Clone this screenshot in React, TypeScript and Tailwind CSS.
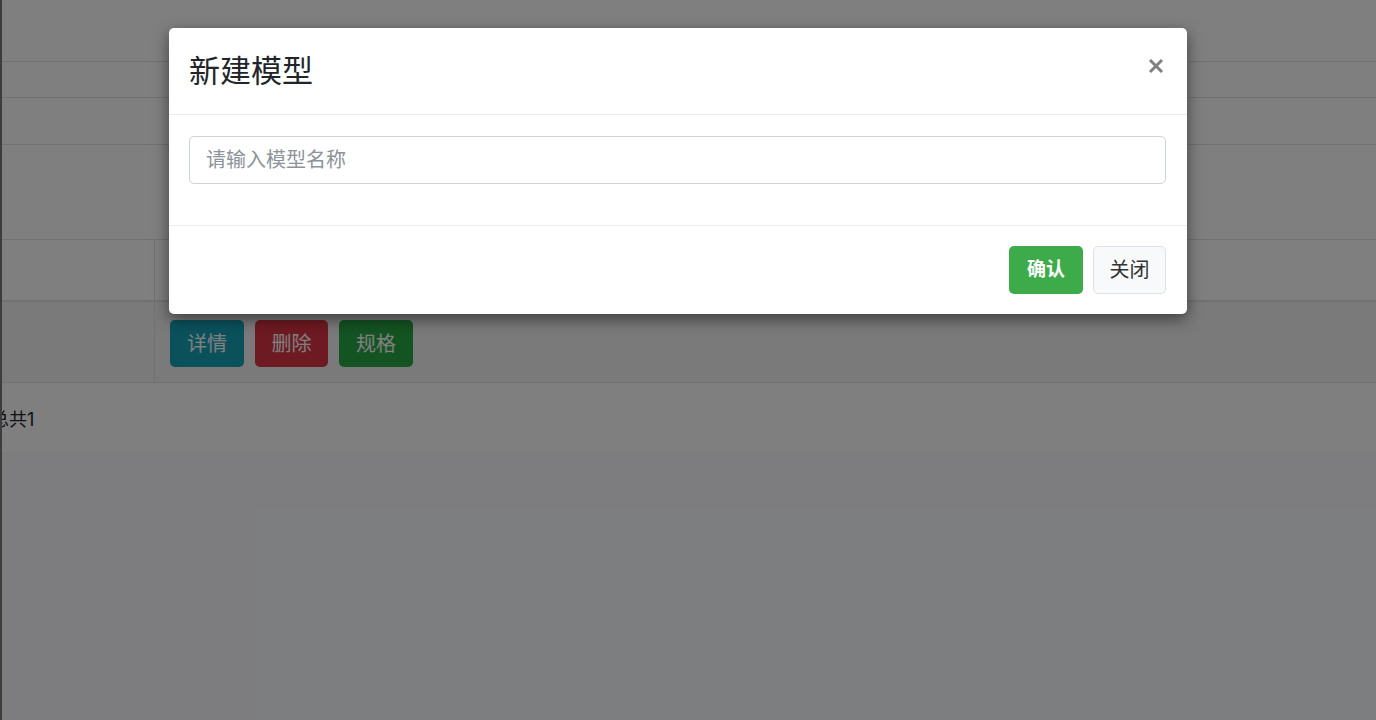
export default function App() {
    return (
        <div className="relative h-[720px] overflow-hidden bg-[#fafbfe] font-['Inter','Noto_Sans_CJK_SC',sans-serif] text-[#212529]">
            {/* page behind the modal */}
            <div className="h-full border-l-2 border-[#7a7a7a]">
                <div className="bg-white">
                    <div className="h-[62px] border-b border-[#dee2e6]"></div>
                    <div className="h-[36px] border-b border-[#dee2e6]"></div>
                    <div className="h-[47px] border-b border-[#dee2e6]"></div>
                    <div className="h-[95px] border-b border-[#dee2e6]"></div>
                    <div className="flex h-[62px] border-b-2 border-[#dee2e6]">
                        <div className="w-[153px] border-r border-[#dee2e6]"></div>
                        <div className="flex-1"></div>
                    </div>
                    <div className="flex h-[81px] border-b border-[#dee2e6] bg-[#f4f4f4]">
                        <div className="w-[153px] border-r border-[#dee2e6]"></div>
                        <div className="flex flex-1 items-start gap-[11px] pl-[15px] pt-[18px]">
                            <button className="h-[47px] w-[74px] rounded-[5px] bg-[#17a2b8] text-[20px] leading-[1.5] text-white">详情</button>
                            <button className="h-[47px] w-[73px] rounded-[5px] bg-[#dc3545] text-[20px] leading-[1.5] text-white">删除</button>
                            <button className="h-[47px] w-[74px] rounded-[5px] bg-[#28a745] text-[20px] leading-[1.5] text-white">规格</button>
                        </div>
                    </div>
                    <div className="flex h-[69px] items-center overflow-hidden pt-[4px]">
                        <span className="ml-[-11px] text-[18px] text-[#212529]">总共1</span>
                    </div>
                </div>
            </div>

            {/* backdrop */}
            <div className="absolute inset-0 bg-black/50"></div>

            {/* modal */}
            <div className="absolute left-[169px] top-[28px] w-[1018px] rounded-[5px] bg-white shadow-[0_5px_15px_rgba(0,0,0,0.5)]">
                <div className="flex h-[87px] items-center justify-between border-b border-[#e9ecef] px-[20px]">
                    <h4 className="text-[31px] font-normal leading-[46px] text-[#212529]">新建模型</h4>
                    <button className="mb-[10px] mr-[3px] text-[#808080]">
                        <svg width="16" height="16" viewBox="0 0 16 16">
                            <path d="M2 2 L14 14 M14 2 L2 14" stroke="currentColor" strokeWidth="3" fill="none" />
                        </svg>
                    </button>
                </div>
                <div className="px-[20px] pb-[41px] pt-[21px]">
                    <input
                        className="block h-[48px] w-[977px] rounded-[5px] border border-[#ced4da] px-[16px] text-[20px] text-[#495057] outline-none placeholder:text-[#8c9399]"
                        placeholder="请输入模型名称"
                    />
                </div>
                <div className="flex h-[89px] items-center justify-end gap-[10px] border-t border-[#e9ecef] px-[21px]">
                    <button className="h-[48px] w-[74px] rounded-[5px] bg-[#3dab4a] text-[19px] font-bold leading-[1.5] text-white">确认</button>
                    <button className="h-[48px] w-[73px] rounded-[5px] border border-[#dee2e6] bg-[#f8f9fa] text-[20px] leading-[1.5] text-[#333]">关闭</button>
                </div>
            </div>
        </div>
    );
}
